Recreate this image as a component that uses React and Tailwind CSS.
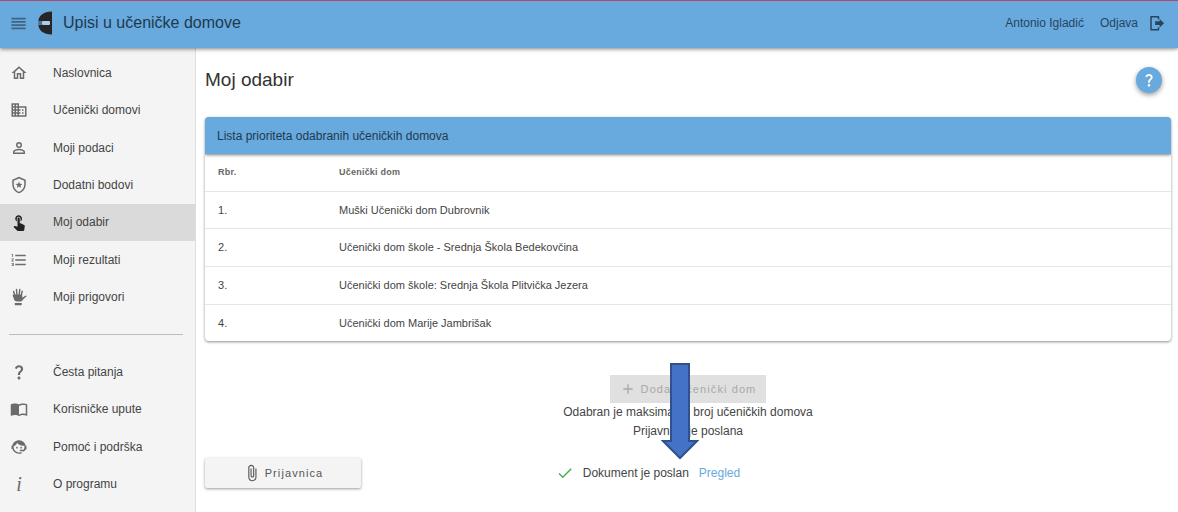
import { MdAdd, MdAttachFile, MdCheck, MdFormatListNumbered, MdImportContacts, MdQuestionMark, MdTouchApp } from 'react-icons/md'

const Svg = ({ size = 18, children }) => (
  <svg width={size} height={size} viewBox="0 0 24 24" fill="currentColor" aria-hidden="true">
    {children}
  </svg>
)

const MenuIcon = () => (
  <Svg size={19}>
    <path d="M3 15.200H21V12.800H3V15.200M3 19.200H21V17.200H3V19.200M3 11.200H21V8.800H3V11.200M3 4.800V6.800H21V4.800H3Z" />
  </Svg>
)

const HomeIcon = () => (
  <Svg>
    <path d="M12 5.69L17 10.19V18H15V12H9V18H7V10.19L12 5.69M12 3L2 12H5V20H11V14H13V20H19V12H22" />
  </Svg>
)

const DomainIcon = () => (
  <Svg>
    <path d="M18,15H16V17H18M18,11H16V13H18M20,19H12V17H14V15H12V13H14V11H12V9H20M10,7H8V5H10M10,11H8V9H10M10,15H8V13H10M10,19H8V17H10M6,7H4V5H6M6,11H4V9H6M6,15H4V13H6M6,19H4V17H6M12,7V3H2V21H22V7H12Z" />
  </Svg>
)

const AccountIcon = () => (
  <Svg>
    <path d="M12,4A4,4 0 0,1 16,8A4,4 0 0,1 12,12A4,4 0 0,1 8,8A4,4 0 0,1 12,4M12,6A2,2 0 0,0 10,8A2,2 0 0,0 12,10A2,2 0 0,0 14,8A2,2 0 0,0 12,6M12,13C14.67,13 20,14.33 20,17V20H4V17C4,14.33 9.33,13 12,13M12,14.9C9.03,14.9 5.9,16.36 5.9,17V18.1H18.1V17C18.1,16.36 14.97,14.9 12,14.9Z" />
  </Svg>
)

const ShieldStarIcon = () => (
  <Svg>
    <path d="M21,11C21,16.55 17.16,21.74 12,23C6.84,21.74 3,16.55 3,11V5L12,1L21,5V11M12,21C15.75,20 19,15.54 19,11.22V6.3L12,3.18L5,6.3V11.22C5,15.54 8.25,20 12,21Z" />
    <path d="M12 7.2L13.2 10.2L16.6 10.5L14 12.6L14.9 15.9L12 14.1L9.1 15.9L10 12.6L7.4 10.5L10.8 10.2Z" />
  </Svg>
)

const HandIcon = () => (
  <Svg>
    <g fill="none" stroke="currentColor" strokeWidth="1.900" strokeLinecap="round">
      <path d="M6.500 10L4.800 4.600M9.300 9L8.600 2M12.300 9L13 2M15 10L16.200 4.400M16.500 14.500L21 11" />
    </g>
    <path d="M4.500 8.500H16L16.600 13L19.600 11.400L16.800 16.200C16 17.400 15 18 13.600 18H9C7.400 18 6.200 17.200 5.600 15.800L3.400 9.600Z" />
    <path d="M6.400 20H15.600V23H6.400Z" />
  </Svg>
)

const AgentIcon = () => (
  <Svg>
    <path d="M18.72,14.76C19.07,13.91 19.26,13 19.26,12C19.26,11.28 19.15,10.59 18.96,9.95C18.31,10.1 17.63,10.18 16.92,10.18C13.86,10.18 11.15,8.67 9.5,6.34C8.61,8.5 6.91,10.26 4.77,11.22C4.73,11.47 4.73,11.74 4.73,12A7.27,7.27 0 0,0 12,19.27C13.05,19.27 14.06,19.04 14.97,18.63C15.54,19.72 15.8,20.26 15.78,20.26C14.14,20.81 12.87,21.08 12,21.08C9.58,21.08 7.27,20.13 5.57,18.42C4.53,17.38 3.76,16.11 3.33,14.73H2V10.18H3.09C3.93,6.04 7.6,2.92 12,2.92C14.4,2.92 16.71,3.87 18.42,5.58C19.69,6.84 20.54,8.45 20.89,10.18H22V14.73H21.94L18.38,18L13.08,17.4V15.73H17.91L18.72,14.76Z" />
    <circle cx="9.27" cy="12.91" r="1.14" />
    <circle cx="14.72" cy="12.91" r="1.14" />
  </Svg>
)

const LogoutIcon = () => (
  <Svg>
    <path d="M14 7V3.500H4V21H14V17.500" fill="none" stroke="currentColor" strokeWidth="2" strokeLinejoin="round" />
    <path d="M9.500 9.800H15.500V6.500L21.500 12.200L15.500 18V14.700H9.500Z" />
  </Svg>
)

const InfoIcon = () => <i className="font-['Liberation_Serif',serif] text-[20px] leading-none">i</i>

const Logo = () => (
  <svg width="14" height="24" viewBox="0 0 14 24" aria-hidden="true">
    <path d="M14 0.500C5 0.500 0.800 5 0.300 10.300H4V13.700H0.300C0.800 19 5 23.500 14 23.500Z" fill="#262626" />
    <rect x="4" y="10" width="8" height="4" rx="1" fill="#a9cdea" />
    <path d="M0.300 10.600H4V13.400H0.300Z" fill="#4a6d8c" />
  </svg>
)

const mainLinks = [
  { label: 'Naslovnica', icon: HomeIcon },
  { label: 'Učenički domovi', icon: DomainIcon },
  { label: 'Moji podaci', icon: AccountIcon },
  { label: 'Dodatni bodovi', icon: ShieldStarIcon },
  { label: 'Moj odabir', icon: MdTouchApp, active: true },
  { label: 'Moji rezultati', icon: MdFormatListNumbered },
  { label: 'Moji prigovori', icon: HandIcon },
]

const helpLinks = [
  { label: 'Česta pitanja', icon: MdQuestionMark },
  { label: 'Korisničke upute', icon: MdImportContacts },
  { label: 'Pomoć i podrška', icon: AgentIcon },
  { label: 'O programu', icon: InfoIcon },
]

const dorms = [
  'Muški Učenički dom Dubrovnik',
  'Učenički dom škole - Srednja Škola Bedekovčina',
  'Učenički dom škole: Srednja Škola Plitvička Jezera',
  'Učenički dom Marije Jambrišak',
]

const NavLink = ({ label, icon: Icon, active }) => (
  <li className={active ? 'bg-[#dadada]' : ''}>
    <a href="#" aria-current={active ? 'page' : undefined} className="flex h-full items-center gap-6 pl-[9px] text-[12px] text-[#444]">
      <span className={`flex w-5 justify-center text-[18px] ${active ? 'text-[#222]' : 'text-[#6b6b6b]'}`}>
        <Icon />
      </span>
      {label}
    </a>
  </li>
)

const Header = () => (
  <header className="relative z-10 flex h-12 items-center border-t border-[#b04a68] bg-[#68a9de] pr-3 pb-[3px] pl-[9px] text-[#27455e] shadow-[0_1px_4px_rgba(0,0,0,0.5)]">
    <button type="button" aria-label="Izbornik" className="mr-[10px] text-[#3f6584]">
      <MenuIcon />
    </button>
    <Logo />
    <span className="ml-[11px] text-base text-[#21394d]">Upisi u učeničke domove</span>
    <span className="ml-auto text-[12px]">Antonio Igladić</span>
    <a href="#" className="ml-4 flex items-center gap-[10px] text-[12px]">
      Odjava
      <LogoutIcon />
    </a>
  </header>
)

const Sidebar = () => (
  <nav className="w-[196px] shrink-0 border-r border-[#dedede] bg-[#f4f4f4] pt-[6px]">
    <ul className="grid h-[262px] auto-rows-fr">
      {mainLinks.map((link) => <NavLink key={link.label} {...link} />)}
    </ul>
    <hr className="mt-[18px] mr-3 mb-[18px] ml-[9px] border-[#bdbdbd]" />
    <ul className="grid h-[150px] auto-rows-fr">
      {helpLinks.map((link) => <NavLink key={link.label} {...link} />)}
    </ul>
  </nav>
)

const PriorityTable = () => (
  <section className="mt-6 overflow-hidden rounded-[4px] shadow-[0_1px_3px_rgba(0,0,0,0.45)]">
    <h2 className="relative flex h-[37px] items-center bg-[#68a9de] px-3 text-[12px] text-[#21394d] shadow-[0_1px_3px_rgba(0,0,0,0.5)]">
      Lista prioriteta odabranih učeničkih domova
    </h2>
    <table className="h-[187px] w-full table-fixed text-left text-[11px] text-[#444]">
      <thead>
        <tr className="h-[37px] border-b border-[#e6e6e6] text-[9px] tracking-wide text-[#666]">
          <th className="w-[122px] pl-[13px] font-bold">Rbr.</th>
          <th className="pl-3 font-bold">Učenički dom</th>
        </tr>
      </thead>
      <tbody>
        {dorms.map((name, i) => (
          <tr key={name} className="border-b border-[#e6e6e6] last:border-b-0">
            <td className="pl-[13px]">{i + 1}.</td>
            <td className="pl-3">{name}</td>
          </tr>
        ))}
      </tbody>
    </table>
  </section>
)

// Points at the "Pregled" row
const Arrow = () => (
  <svg width="38" height="97" viewBox="0 0 38 97" className="absolute -top-3 left-1/2 -translate-x-[27px]" aria-hidden="true">
    <path d="M10 1H28V78H36L19 95L2 78H10Z" fill="#4472c4" stroke="#2f528f" strokeWidth="2" />
  </svg>
)

export default function App() {
  return (
    <div className="flex min-h-screen flex-col bg-white font-['Liberation_Sans',Arial,sans-serif]">
      <Header />
      <div className="flex flex-1">
        <Sidebar />
        <main className="min-w-0 flex-1 pt-[19px] pr-[7px] pl-[9px]">
          <div className="flex items-center justify-between pr-[9px]">
            <h1 className="text-[19px] leading-[26px] text-[#333]">Moj odabir</h1>
            <button type="button" aria-label="Pomoć" className="flex size-[26px] items-center justify-center rounded-full bg-[#68a9de] text-[16px] text-white shadow-[0_2px_5px_rgba(0,0,0,0.4)]">
              <MdQuestionMark />
            </button>
          </div>

          <PriorityTable />

          <div className="relative mt-[34px] flex flex-col items-center text-[12px] text-[#444]">
            <button type="button" disabled className="flex h-7 items-center gap-[5px] bg-[#e0e0e0] px-[10px] text-[11px] tracking-widest text-[#a8a8a8]">
              <MdAdd className="text-[16px]" />
              Dodaj učenički dom
            </button>
            <p className="leading-[19px]">Odabran je maksimalan broj učeničkih domova</p>
            <p className="leading-[19px]">Prijavnica je poslana</p>
            <Arrow />
          </div>

          <div className="mt-[17px] grid grid-cols-[1fr_auto_1fr] items-center">
            <button type="button" className="flex h-[30px] w-[156px] items-center justify-center gap-1 rounded-[2px] bg-[#f4f4f4] text-[11px] tracking-widest text-[#555] shadow-[0_1px_3px_rgba(0,0,0,0.4)]">
              <MdAttachFile className="text-[18px]" />
              Prijavnica
            </button>
            <p className="flex items-center text-[12px] text-[#444]">
              <MdCheck className="mr-[9px] text-[18px] text-[#4caf50]" />
              Dokument je poslan
              <a href="#" className="mr-20 ml-[10px] text-[#68a9de]">Pregled</a>
            </p>
          </div>
        </main>
      </div>
    </div>
  )
}
